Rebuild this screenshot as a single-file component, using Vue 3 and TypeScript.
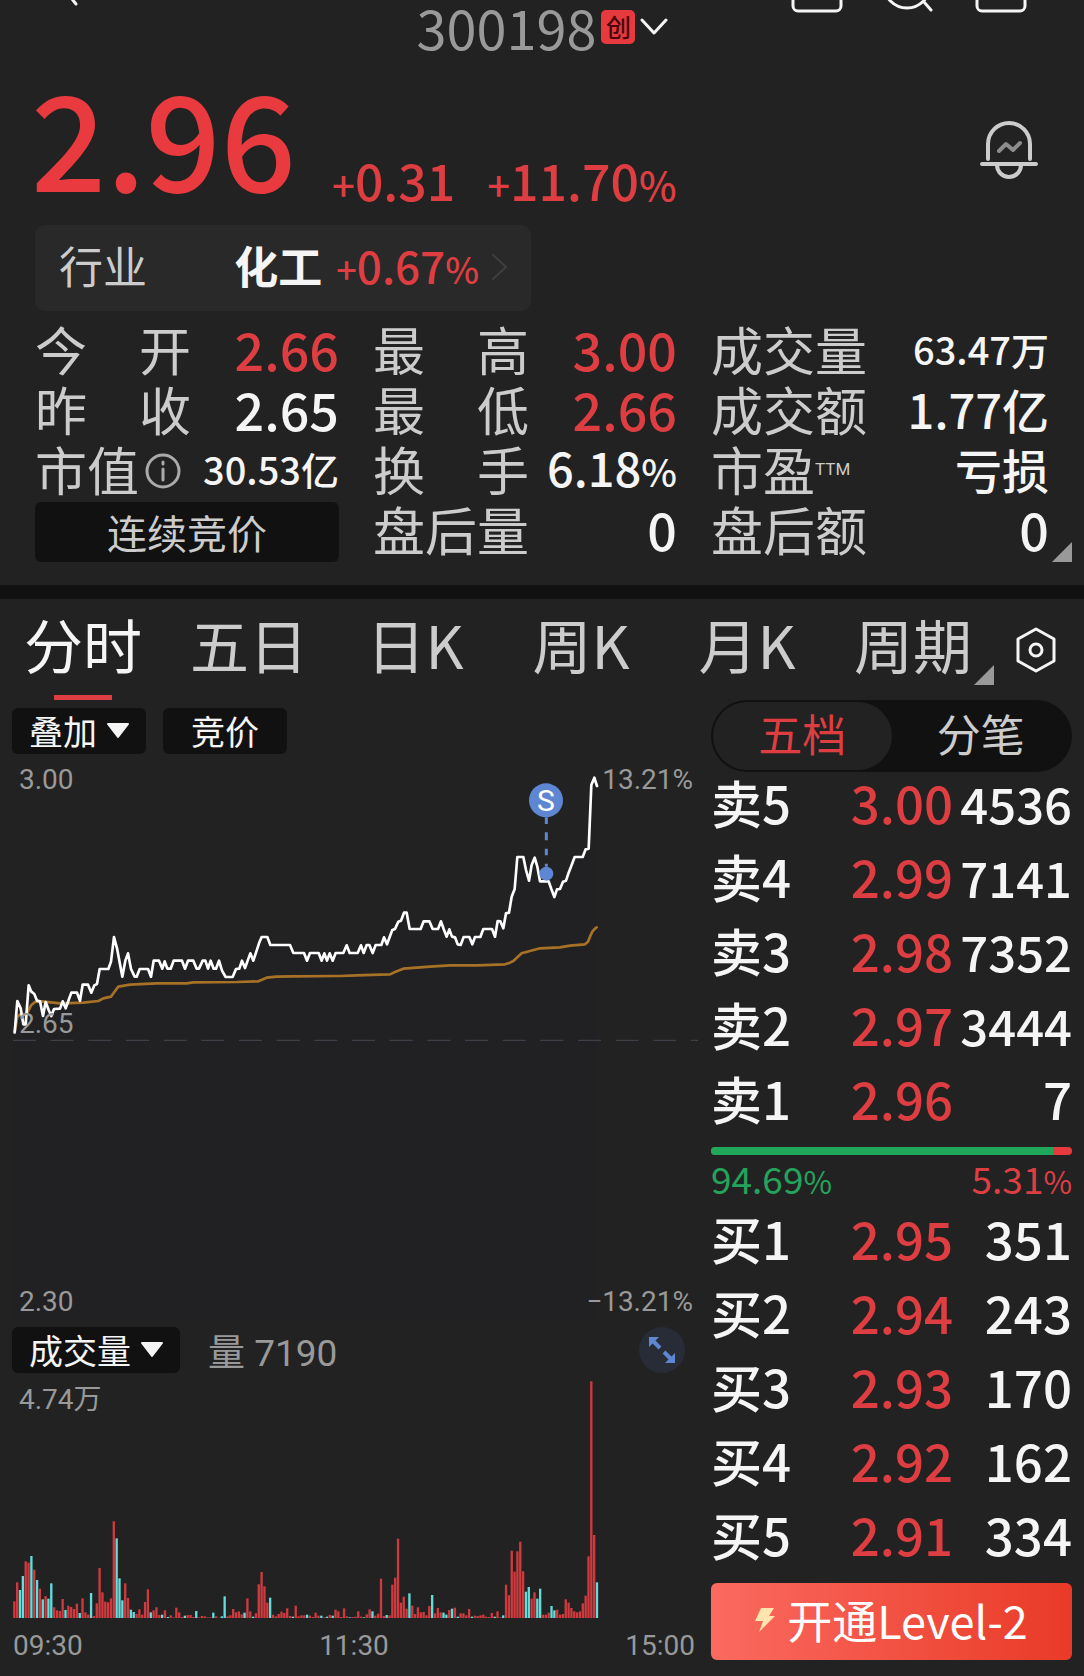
<script setup lang="ts">
import { computed, ref } from 'vue'

type Tone = 'up' | 'plain'

interface Stat {
  label: string
  value: string
  tone?: Tone
  size?: 'sm' | 'md'
  spread?: boolean
  unit?: string
  info?: boolean
  ttm?: boolean
}

const stats: Stat[] = [
  { label: '今开', value: '2.66', tone: 'up', spread: true },
  { label: '最高', value: '3.00', tone: 'up', spread: true },
  { label: '成交量', value: '63.47万', size: 'sm' },
  { label: '昨收', value: '2.65', spread: true },
  { label: '最低', value: '2.66', tone: 'up', spread: true },
  { label: '成交额', value: '1.77亿', size: 'md' },
  { label: '市值', value: '30.53亿', size: 'sm', info: true },
  { label: '换手', value: '6.18', size: 'md', unit: '%', spread: true },
  { label: '市盈', value: '亏损', size: 'md', ttm: true },
]
const afterHours: Stat[] = [
  { label: '盘后量', value: '0' },
  { label: '盘后额', value: '0' },
]

const tabs = ['分时', '五日', '日K', '周K', '月K', '周期']
const activeTab = ref('分时')
const bookMode = ref('五档')

interface Level {
  name: string
  price: string
  qty: string
}
const asks: Level[] = [
  { name: '卖5', price: '3.00', qty: '4536' },
  { name: '卖4', price: '2.99', qty: '7141' },
  { name: '卖3', price: '2.98', qty: '7352' },
  { name: '卖2', price: '2.97', qty: '3444' },
  { name: '卖1', price: '2.96', qty: '7' },
]
const bids: Level[] = [
  { name: '买1', price: '2.95', qty: '351' },
  { name: '买2', price: '2.94', qty: '243' },
  { name: '买3', price: '2.93', qty: '170' },
  { name: '买4', price: '2.92', qty: '162' },
  { name: '买5', price: '2.91', qty: '334' },
]
const buyShare = 94.69

// Each session's knots are x,y pairs relative to that session's own origin.
interface Session {
  x: number
  y: number
  knots: string
}
const priceSessions: Session[] = [
  {
    x: 0,
    y: 240,
    knots:
      '44,577 52,483 62,505 70,553 77,553 86,436 94,455 103,462 111,482 120,484 129,528 137,486 146,510 154,528 162,507 180,506 188,484 197,505 206,480 214,458 231,458 240,482 248,434 264,434 274,458 283,436 291,432 299,387 325,387 333,365 342,291 351,325 367,410 376,362 384,340 393,387 404,410 410,410 419,387 444,387 453,410 461,362 477,362 487,386 494,364 502,386 512,386 521,362 546,362 555,386 564,362 580,362 590,386 597,386 608,362 616,362 624,386 632,362 641,386 648,386 657,362 666,392 677,411 698,411 708,387 718,386 726,362 735,384 743,362 751,340 760,362 769,335 777,310 785,291 802,291 811,315 870,315 880,339 912,339 921,362 930,339 956,339 965,362 973,340 981,362 989,340 998,362 1007,339 1020,339',
  },
  {
    x: 1020,
    y: 0,
    knots:
      '10,579 20,556 29,579 53,579 63,556 71,579 80,555 88,555 98,579 107,555 124,555 132,532 141,553 149,531 157,510 165,507 175,485 183,482 192,458 200,458 209,507 242,507 251,484 268,484 278,507 294,507 303,484 311,507 320,530 328,508 336,530 345,532 353,553 362,555 371,531 388,531 397,553 405,531 421,531 430,507 456,507 465,530 473,483 481,484 490,505 498,460 507,458 515,410 524,387 532,291 550,291 558,330 567,362 575,315 584,293 592,320 600,364 626,364 634,387 643,411 651,388 660,387 669,365 678,362 686,338 695,315 704,291 728,291 737,268 746,266 754,75 763,53 771,78',
  },
]
const averageSessions: Session[] = [
  {
    x: 0,
    y: 240,
    knots:
      '44,577 52,530 62,522 78,525 86,510 94,495 105,486 125,484 180,490 250,488 295,483 310,475 333,470 343,456 355,440 390,434 470,430 560,430 580,427 710,426 775,424 800,413 830,410 880,409 1015,408',
  },
  {
    x: 1020,
    y: 0,
    knots:
      '0,648 50,646 120,644 150,643 165,636 190,626 270,620 330,616 410,616 495,613 510,608 520,603 545,580 570,573 600,565 660,562 690,557 735,553 744,545 750,530 757,515 764,507 770,502',
  },
]

function join(sessions: Session[]): string {
  return sessions
    .flatMap((s) =>
      s.knots.split(' ').map((k) => {
        const [x, y] = k.split(',').map(Number)
        return `${x + s.x},${y + s.y}`
      }),
    )
    .join(' ')
}
const priceLine = computed(() => join(priceSessions))
const priceArea = computed(() => `${priceLine.value} 1791,1680 44,1680`)
const averageLine = computed(() => join(averageSessions))

// One entry per traded minute; negative marks a falling minute.
const volumes: number[] = [
  50, 107, -84, -126, 170, 166, -186, 145, -114, 88, -56, 66, -58, -104, 32, 23, 21, 57, -24, 37,
  33, 27, 43, -15, 59, 17, 10, -75, 6, 44, 150, 77, 49, 47, 59, 290, -239, -119, -53, 104,
  60, -25, -18, 12, 26, 10, 48, 86, -17, 23, 32, 9, -10, 23, -3, 8, 2, 31, 17, 3,
  -7, 9, 9, 3, -21, 2, 6, 5, 2, 2, -16, 5, 1, -5, -65, 5, 8, 27, 17, 20,
  11, -16, 59, 20, -4, 14, 101, 138, 95, 46, -61, 10, 5, 12, 19, 15, 29, 6, -4, 37,
  5, 8, 8, -10, 7, 3, 16, 7, -7, 2, -4, 9, -7, 25, 20, 3, 29, 5, -2, 3,
  4, 20, 4, -2, 11, 26, -20, 7, 13, 118, 6, -9, 8, 100, 121, 238, 46, 64, 28, -74,
  37, 12, 32, 17, 18, 8, 36, -69, 14, 30, 17, -16, -10, 24, -28, 31, -4, 14, 14, 8,
  27, -4, 7, 6, 8, 10, 4, 3, 15, -4, 20, 2, -8, 100, 68, 202, 139, 200, 229, 140,
  -79, -93, 58, 77, -58, -88, 10, 10, 16, -36, -23, 25, 10, 12, 56, 46, 30, 20, 17, 20,
  44, 67, 185, 710, 249, -107,
]
const MINUTE = 8.527
const bars = computed(() =>
  volumes.map((v, i) => ({
    x: 39.5 + i * MINUTE,
    y: 714 - Math.abs(v),
    h: Math.abs(v),
    down: v < 0,
  })),
)
</script>

<template>
  <main class="page">
    <header class="top">
      <button class="icon-btn back" type="button" aria-label="返回">
        <svg width="24" height="8" viewBox="0 0 24 8"><path d="M14-6 22 4" /></svg>
      </button>
      <button class="code" type="button">
        <span>300198</span>
        <span class="badge">创</span>
        <svg width="28" height="18" viewBox="0 0 28 18"><path d="M2 2 14 15 26 2" /></svg>
      </button>
      <div class="actions">
        <button class="icon-btn" type="button" aria-label="分享">
          <svg width="52" height="14" viewBox="0 0 52 14"><rect x="2" y="-30" width="48" height="41" rx="5" /></svg>
        </button>
        <button class="icon-btn" type="button" aria-label="搜索">
          <svg width="52" height="14" viewBox="0 0 52 14">
            <circle cx="24" cy="-15" r="23" /><path d="M41 2 48 10" />
          </svg>
        </button>
        <button class="icon-btn" type="button" aria-label="更多">
          <svg width="52" height="14" viewBox="0 0 52 14"><rect x="2" y="-30" width="48" height="41" rx="5" /></svg>
        </button>
      </div>
    </header>

    <section class="quote up">
      <strong class="last">2.96</strong>
      <span class="delta"><small>+</small>0.31</span>
      <span class="delta"><small>+</small>11.70<small>%</small></span>
      <button class="icon-btn bell" type="button" aria-label="提醒">
        <svg width="58" height="60" viewBox="0 0 58 60">
          <path d="M8 39V24a21 21 0 0 1 42 0v15M2 44h54M17 45a12 12 0 0 0 24 0" />
          <path class="dim" d="m19 31 7-7 7 6 7-7" />
        </svg>
      </button>
    </section>

    <a class="industry" href="#industry">
      <span class="ind-label">行业</span>
      <b>化工</b>
      <span class="ind-value up"><small>+</small>0.67<small>%</small></span>
      <svg width="18" height="28" viewBox="0 0 18 28"><path d="M2 2 15 14 2 26" /></svg>
    </a>

    <section class="stats">
      <dl v-for="s in stats" :key="s.label" class="stat">
        <dt :class="{ spread: s.spread }">
          {{ s.label
          }}<svg v-if="s.info" class="info" width="36" height="36" viewBox="0 0 36 36">
            <circle cx="18" cy="18" r="16" /><path d="M18 16v11M18 9v2" />
          </svg><sup v-if="s.ttm">TTM</sup>
        </dt>
        <dd :class="[s.tone, s.size]">{{ s.value }}<small v-if="s.unit">{{ s.unit }}</small></dd>
      </dl>
      <button class="phase" type="button">连续竞价</button>
      <dl v-for="s in afterHours" :key="s.label" class="stat">
        <dt>{{ s.label }}</dt>
        <dd>{{ s.value }}</dd>
      </dl>
      <i class="corner"></i>
    </section>

    <nav class="tabs">
      <button
        v-for="t in tabs"
        :key="t"
        type="button"
        class="tab"
        :class="{ active: t === activeTab }"
        @click="activeTab = t"
      >
        {{ t }}<i v-if="t === '周期'" class="corner"></i>
      </button>
      <button class="icon-btn settings" type="button" aria-label="设置">
        <svg width="42" height="46" viewBox="0 0 42 46">
          <path d="M21 2 39 12V34L21 44 3 34V12Z" /><circle cx="21" cy="23" r="6" />
        </svg>
      </button>
    </nav>

    <div class="body">
      <section class="charts">
        <div class="tools">
          <button class="chip" type="button">
            叠加<svg width="26" height="18" viewBox="0 0 26 18"><path d="M3 2H23L13 15Z" /></svg>
          </button>
          <button class="chip wide" type="button">竞价</button>
        </div>

        <div class="price-chart">
          <svg class="plot" viewBox="0 0 2133 1680">
            <polygon class="area" :points="priceArea" />
            <path class="base" d="M39 841H2094" />
            <polyline class="avg" :points="averageLine" />
            <polyline class="line" :points="priceLine" />
            <path class="lead" d="M1639 172V320" />
            <circle class="mark" cx="1638" cy="121" r="51" />
            <circle class="mark" cx="1639" cy="341" r="21" />
            <text x="1638" y="154" text-anchor="middle">S</text>
          </svg>
          <span class="tick tl">3.00</span>
          <span class="tick tr">13.21%</span>
          <span class="tick ml">2.65</span>
          <span class="tick bl">2.30</span>
          <span class="tick br">−13.21%</span>
        </div>

        <div class="tools vol-tools">
          <button class="chip" type="button">
            成交量<svg width="26" height="18" viewBox="0 0 26 18"><path d="M3 2H23L13 15Z" /></svg>
          </button>
          <span class="vol-now">量 7190</span>
          <button class="icon-btn expand" type="button" aria-label="放大">
            <svg width="46" height="46" viewBox="0 0 46 46">
              <path class="head" d="M10 10h10l-3 3-4 4-3 3ZM36 36H26l3-3 4-4 3-3Z" />
              <path d="m13 13 8 8M33 33l-8-8" />
            </svg>
          </button>
        </div>

        <div class="volume-chart">
          <svg class="plot" viewBox="0 0 2133 714">
            <rect
              v-for="(b, i) in bars"
              :key="i"
              :class="{ down: b.down }"
              :x="b.x"
              :y="b.y"
              width="7"
              :height="b.h"
            />
          </svg>
          <span class="tick vl">4.74万</span>
        </div>

        <div class="axis">
          <span>09:30</span>
          <span>11:30</span>
          <span>15:00</span>
        </div>
      </section>

      <aside class="book">
        <div class="toggle">
          <button
            v-for="m in ['五档', '分笔']"
            :key="m"
            type="button"
            :class="{ on: m === bookMode }"
            @click="bookMode = m"
          >
            {{ m }}
          </button>
        </div>
        <table class="asks">
          <tbody>
            <tr v-for="l in asks" :key="l.name">
              <th scope="row">{{ l.name }}</th>
              <td class="price up">{{ l.price }}</td>
              <td class="qty" :class="{ long: l.qty.length > 3 }">{{ l.qty }}</td>
            </tr>
          </tbody>
        </table>
        <div class="ratio"><i :style="{ width: buyShare + '%' }"></i></div>
        <div class="shares">
          <span class="green">94.69<small>%</small></span>
          <span class="up">5.31<small>%</small></span>
        </div>
        <table class="bids">
          <tbody>
            <tr v-for="l in bids" :key="l.name">
              <th scope="row">{{ l.name }}</th>
              <td class="price up">{{ l.price }}</td>
              <td class="qty">{{ l.qty }}</td>
            </tr>
          </tbody>
        </table>
        <button class="level2" type="button">
          <svg width="20" height="24" viewBox="0 0 20 24">
            <path d="M6 0H19L14 8H20L4 24 8 13H0Z" />
          </svg>
          开通Level-2
        </button>
      </aside>
    </div>
  </main>
</template>

<style>
body {
  margin: 0;
  background: #222;
}
</style>

<style scoped>
.page {
  background: #222;
  color: #f5f5f5;
  font-family: 'Noto Sans CJK SC', sans-serif;
  overflow: hidden;
}
button {
  border: 0;
  padding: 0;
  margin: 0;
  background: none;
  color: inherit;
  font: inherit;
  cursor: pointer;
}
svg {
  display: block;
  fill: none;
  stroke-linecap: round;
  stroke-linejoin: round;
}
.up {
  color: #de3e42;
}
.green {
  color: #25a35d;
}

.top {
  display: grid;
  grid-template-columns: 1fr auto 1fr;
  height: 54px;
  padding: 0 57px 0 54px;
}
.top svg {
  stroke: #f5f5f5;
  stroke-width: 3;
}
.back,
.actions {
  align-self: start;
}
.back {
  justify-self: start;
}
.code {
  display: flex;
  align-items: center;
  height: 54px;
  gap: 5px;
  font-size: 54px;
  line-height: 50px;
  color: #999;
}
.code > span:first-child {
  margin-left: 4px;
}
.badge {
  width: 34px;
  height: 34px;
  border-radius: 5px;
  background: #e63a3f;
  color: #4a0508;
  font-size: 25px;
  font-weight: 500;
  line-height: 32px;
  text-align: center;
}
.actions {
  display: flex;
  justify-content: flex-end;
  gap: 40px;
}

.quote {
  display: flex;
  align-items: flex-end;
  height: 141px;
  padding: 19px 46px 0 31px;
}
.last {
  align-self: flex-start;
  margin-right: 36px;
  color: #e93a3f;
  font-size: 132px;
  font-weight: 500;
  line-height: 124px;
}
.delta {
  margin-right: 32px;
  font-size: 50px;
  font-weight: 500;
  line-height: 60px;
}
.delta small {
  font-size: 40px;
}
.bell {
  margin: 0 0 34px auto;
}
.bell svg {
  stroke: #ccc;
  stroke-width: 4;
}
.bell .dim {
  stroke: #8c8c8c;
}

.industry {
  display: flex;
  align-items: center;
  box-sizing: border-box;
  width: 496px;
  height: 86px;
  margin: 11px 0 0 35px;
  padding: 0 22px 6px 24px;
  border-radius: 10px;
  background: #292929;
  color: #f5f5f5;
  font-size: 44px;
  text-decoration: none;
}
.ind-label {
  flex: 1;
  color: #ccc;
}
.ind-value {
  margin: 0 12px 0 14px;
  font-weight: 500;
}
.ind-value small {
  font-size: 36px;
}
.industry svg {
  margin-top: 4px;
  stroke: #3f3f3f;
  stroke-width: 2;
}

.stats {
  position: relative;
  display: grid;
  grid-template-columns: 304fr 304fr 338fr;
  grid-auto-rows: 60px;
  column-gap: 34px;
  padding: 11px 35px 23px;
  border-bottom: 14px solid #111;
}
.stat {
  display: flex;
  align-items: center;
  justify-content: space-between;
  height: 54px;
  margin: 0;
  line-height: 54px;
  white-space: nowrap;
}
.stat dt {
  display: flex;
  align-items: center;
  min-width: 156px;
  color: #ccc;
  font-size: 52px;
}
.stat dt.spread {
  display: block;
  text-align-last: justify;
}
.stat dd {
  margin: 0;
  font-size: 52px;
  font-weight: 500;
}
.stat dd.md {
  font-size: 47px;
}
.stat dd.sm {
  font-size: 38px;
}
.stat small {
  font-size: 38px;
}
.info {
  margin: 4px 0 0 6px;
  stroke: #aaa;
  stroke-width: 3;
}
sup {
  font-family: Roboto, sans-serif;
  font-size: 17px;
  font-weight: 400;
  line-height: 54px;
}
.phase {
  border-radius: 6px;
  background: #111;
  color: #ccc;
  font-size: 40px;
  line-height: 56px;
}
.corner {
  position: absolute;
  right: 12px;
  bottom: 23px;
  width: 20px;
  height: 20px;
  background: #999;
  clip-path: polygon(100% 0, 100% 100%, 0 100%);
}

.tabs {
  display: flex;
  height: 101px;
}
.tab {
  position: relative;
  flex: 1;
  color: #ccc;
  font-size: 59px;
  line-height: 90px;
  height: 101px;
  padding-bottom: 11px;
  white-space: nowrap;
}
.tab.active {
  color: #f5f5f5;
}
.tab.active::after {
  content: '';
  position: absolute;
  left: 50%;
  bottom: 0;
  width: 58px;
  height: 5px;
  margin-left: -29px;
  background: #de3e42;
}
.tab .corner {
  right: 2px;
  bottom: 15px;
}
.settings {
  display: flex;
  justify-content: center;
  width: 80px;
  margin-right: 8px;
  padding-top: 28px;
}
.settings svg {
  stroke: #f5f5f5;
  stroke-width: 3;
}

.body {
  display: flex;
}
.charts {
  flex: 1;
  min-width: 0;
  padding-top: 8px;
}
.tools {
  display: flex;
  align-items: center;
  height: 46px;
  padding-left: 12px;
  margin-bottom: 6px;
}
.chip {
  display: flex;
  align-items: center;
  justify-content: center;
  height: 46px;
  padding: 0 15px 0 17px;
  border-radius: 6px;
  background: #111;
  font-size: 34px;
  line-height: 42px;
}
.chip svg {
  margin-left: 8px;
  fill: #f5f5f5;
  stroke: #f5f5f5;
  stroke-width: 2;
}
.chip.wide {
  margin-left: 17px;
  padding: 0 28px;
}
.plot {
  width: 100%;
}
.price-chart,
.volume-chart {
  position: relative;
}
.area {
  fill: #212124;
}
.base {
  stroke: #3f3f47;
  stroke-width: 4;
  stroke-linecap: butt;
  stroke-dasharray: 69 44;
}
.avg {
  stroke: #a87226;
  stroke-width: 8;
}
.line {
  stroke: #fff;
  stroke-width: 8;
}
.lead {
  stroke: #5f86d3;
  stroke-width: 9;
  stroke-linecap: butt;
  stroke-dasharray: 20 25 24 25;
}
.mark {
  fill: #5f86d3;
}
.price-chart text {
  fill: #fff;
  font-family: Roboto, sans-serif;
  font-size: 90px;
}
.tick,
.axis {
  color: #999;
  font-family: Roboto, 'Noto Sans CJK SC', sans-serif;
  font-size: 28px;
  line-height: 32px;
}
.tick {
  position: absolute;
  left: 19px;
}
.tl {
  top: 4px;
}
.tr,
.br {
  left: auto;
  right: 18px;
}
.tr {
  top: 4px;
}
.ml {
  top: 248px;
}
.bl,
.br {
  bottom: 2px;
}
.vol-tools {
  margin: 7px 0;
}
.vol-now {
  margin-left: 28px;
  padding-top: 8px;
  color: #999;
  font-family: Roboto, 'Noto Sans CJK SC', sans-serif;
  font-size: 37px;
  line-height: 46px;
}
.expand {
  margin: 0 26px 0 auto;
  border-radius: 50%;
  background: #272c36;
}
.expand svg {
  stroke: #5f86d3;
  stroke-width: 4;
  stroke-linecap: butt;
}
.expand .head {
  fill: #5f86d3;
  stroke: none;
}
.volume-chart rect {
  fill: #cf3a3e;
}
.volume-chart rect.down {
  fill: #63dcdc;
}
.vl {
  top: 4px;
}
.axis {
  display: flex;
  justify-content: space-between;
  margin: 12px 16px 0 13px;
}

.book {
  width: 361px;
  margin-right: 12px;
  padding-bottom: 15px;
}
.toggle {
  display: flex;
  box-sizing: border-box;
  height: 72px;
  padding: 2px;
  border-radius: 36px;
  background: #111;
}
.toggle button {
  flex: 1;
  border-radius: 34px;
  color: #ccc;
  font-size: 44px;
  line-height: 62px;
  padding-bottom: 6px;
}
.toggle .on {
  background: #222;
  color: #de3e42;
}
table {
  width: 100%;
  table-layout: fixed;
  border-collapse: collapse;
}
th,
td {
  height: 74px;
  padding: 0;
  line-height: 53px;
  vertical-align: top;
  white-space: nowrap;
  font-size: 51px;
  font-weight: 500;
}
th {
  width: 133px;
  text-align: left;
}
.price {
  width: 116px;
  text-align: center;
}
.qty {
  text-align: right;
}
.qty.long {
  font-size: 49px;
}
.asks {
  margin-top: 4px;
}
.ratio {
  height: 8px;
  margin-top: 1px;
  border-radius: 4px;
  overflow: hidden;
  background: #e63a3f;
}
.ratio i {
  display: block;
  height: 100%;
  background: #1fa75a;
}
.shares {
  display: flex;
  justify-content: space-between;
  margin: 5px 0 13px;
  font-size: 37px;
  line-height: 36px;
}
.shares small {
  font-size: 31px;
}
.level2 {
  display: flex;
  align-items: center;
  justify-content: center;
  gap: 12px;
  width: 100%;
  height: 77px;
  margin-top: 1px;
  padding-bottom: 4px;
  border-radius: 6px;
  background: linear-gradient(90deg, #fb6a60, #e93a27);
  color: #fff;
  font-size: 45px;
}
.level2 svg {
  fill: #ffe3b0;
}
</style>
